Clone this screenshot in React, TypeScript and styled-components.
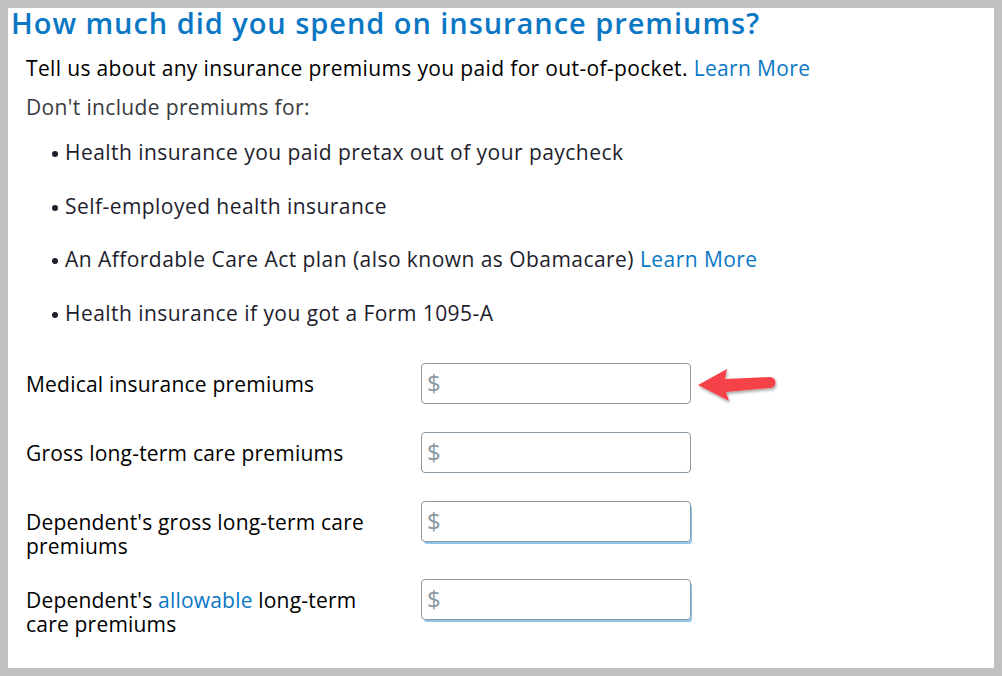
import React from "react";
import styled, { createGlobalStyle } from "styled-components";

const GlobalStyle = createGlobalStyle`
	html, body {
		margin: 0;
		padding: 0;
		background: #c0c0c0;
	}
	body {
		font-family: "Open Sans", Lato, "Liberation Sans", sans-serif;
	}
`;

export default function App() {
	const fields = [
		{ label: <>Medical insurance premiums</>, arrow: true },
		{ label: <>Gross long-term care premiums</> },
		{ label: <>Dependent's gross long-term care premiums</>, shadow: true },
		{
			label: (
				<>
					Dependent's <Link>allowable</Link> long-term care premiums
				</>
			),
			shadow: true,
		},
	];

	return (
		<Frame>
			<GlobalStyle />
			<Page>
				<Title>How much did you spend on insurance premiums?</Title>
				<Intro>
					Tell us about any insurance premiums you paid for out-of-pocket.{" "}
					<Link>Learn More</Link>
				</Intro>
				<Note>Don't include premiums for:</Note>
				<List>
					<Item>Health insurance you paid pretax out of your paycheck</Item>
					<Item>Self-employed health insurance</Item>
					<Item>
						An Affordable Care Act plan (also known as Obamacare){" "}
						<Link>Learn More</Link>
					</Item>
					<Item>Health insurance if you got a Form 1095-A</Item>
				</List>
				<Form>
					{fields.map((f, i) => (
						<Row key={i}>
							<Label>{f.label}</Label>
							<InputBox $shadow={f.shadow}>
								<Dollar>$</Dollar>
							</InputBox>
							{f.arrow && (
								<Arrow width="82" height="42" viewBox="0 0 82 42">
									<defs>
										<filter id="sh" x="-20%" y="-30%" width="140%" height="170%">
											<feDropShadow dx="1" dy="2" stdDeviation="1.5" floodColor="#000" floodOpacity="0.35" />
										</filter>
									</defs>
									<path
										d="M2 21 L31 5 L29 15 L74 13 A5.5 5.5 0 0 1 74 24 L30 28 L33 37 Z"
										fill="#f5424a"
										filter="url(#sh)"
									/>
								</Arrow>
							)}
						</Row>
					))}
				</Form>
			</Page>
		</Frame>
	);
}

const Frame = styled.div`
	width: 1002px;
	height: 676px;
	padding: 8px 8px 8px 8px;
	box-sizing: border-box;
	background: #c0c0c0;
`;

const Page = styled.div`
	background: #fff;
	height: 660px;
	box-sizing: border-box;
	padding: 0 0 0 3px;
	overflow: hidden;
`;

const Title = styled.h1`
	margin: 0;
	font-size: 29px;
	font-weight: 600;
	color: #0a77c4;
	line-height: 30px;
	letter-spacing: 0.95px;
`;

const Text = styled.p`
	margin: 0 0 0 15px;
	font-size: 21px;
	line-height: 24px;
	letter-spacing: 0.35px;
`;

const Intro = styled(Text)`
	margin-top: 18px;
	color: #000;
`;

const Note = styled(Text)`
	margin-top: 15px;
	color: #393a3d;
`;

const Link = styled.span`
	color: #0a77c4;
`;

const List = styled.ul`
	margin: 21px 0 0 0;
	padding: 0 0 0 40px;
	list-style: none;
`;

const Item = styled.li`
	position: relative;
	font-size: 21px;
	line-height: 24px;
	letter-spacing: 0.45px;
	color: #1e1e2d;
	padding-left: 14px;
	margin-bottom: 29.5px;
	&::before {
		content: "";
		position: absolute;
		left: 1px;
		top: 11px;
		width: 6px;
		height: 6px;
		border-radius: 50%;
		background: #1e1e2d;
	}
`;

const Form = styled.div`
	display: flex;
	flex-direction: column;
	gap: 21px;
	margin: 38px 0 0 15px;
`;

const Row = styled.div`
	display: flex;
	align-items: flex-start;
	min-height: 48px;
`;

const Label = styled.div`
	width: 395px;
	font-size: 21px;
	line-height: 24px;
	letter-spacing: 0.2px;
	color: #000;
	padding: 9px 30px 0 0;
	box-sizing: border-box;
`;

const InputBox = styled.div<{ $shadow?: boolean }>`
	width: 270px;
	height: 41px;
	box-sizing: border-box;
	border: 1px solid #8997a2;
	border-radius: 4px;
	display: flex;
	align-items: center;
	padding-left: 5px;
	box-shadow: ${(p) => (p.$shadow ? "2px 3px 0 -1px #8ec3ea" : "none")};
`;

const Dollar = styled.span`
	font-size: 24px;
	line-height: 24px;
	color: #8997a2;
`;

const Arrow = styled.svg`
	margin: 1px 0 0 5px;
`;
